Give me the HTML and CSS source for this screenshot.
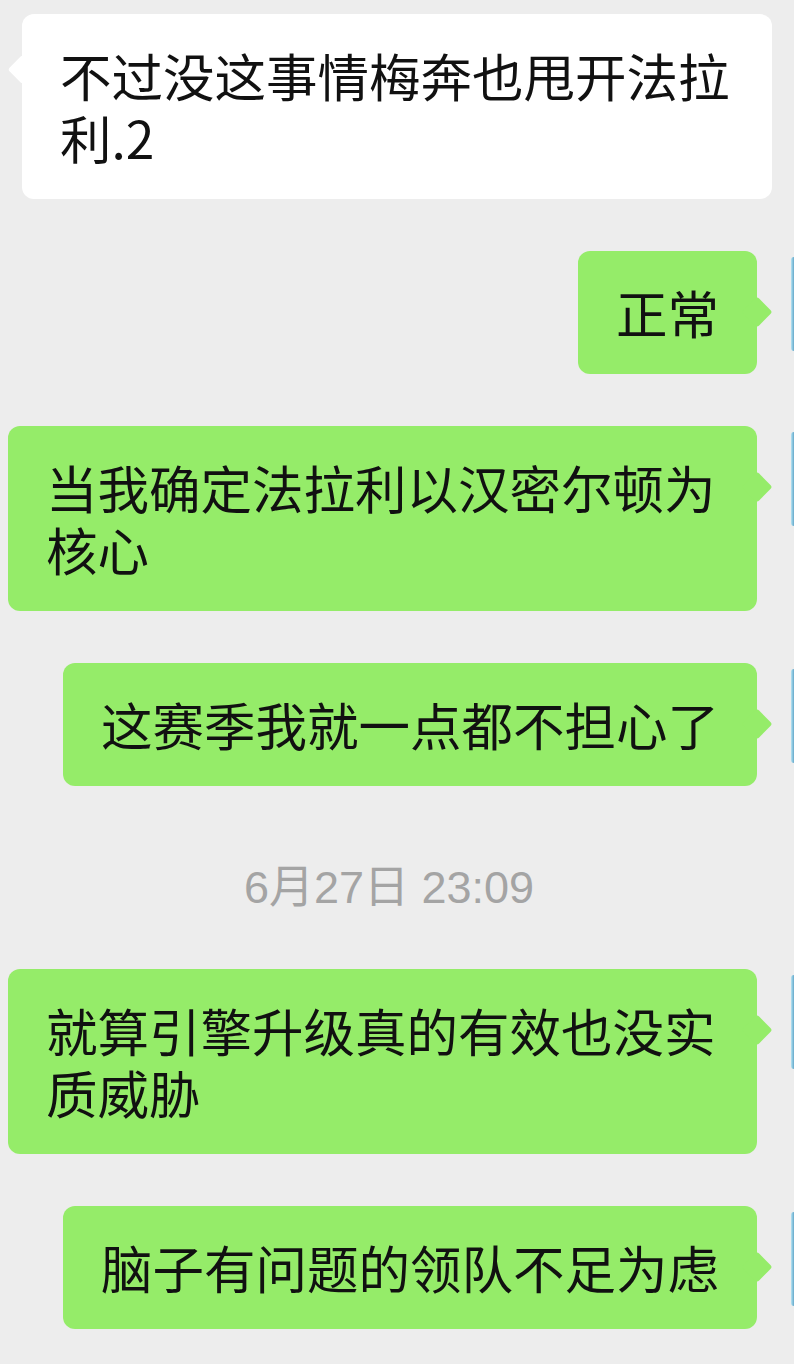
FILE: index.html
```html
<!DOCTYPE html>
<html lang="zh-CN">
<head>
<meta charset="utf-8">
<link rel="stylesheet" href="styles.css">
</head>
<body>
<div class="chat">
  <div class="row row-left">
    <div class="bubble bubble-in">不过没这事情梅奔也甩开法拉利.2</div>
  </div>
  <div class="row row-right">
    <div class="bubble bubble-out">正常</div>
    <div class="avatar"></div>
  </div>
  <div class="row row-right">
    <div class="bubble bubble-out">当我确定法拉利以汉密尔顿为核心</div>
    <div class="avatar"></div>
  </div>
  <div class="row row-right">
    <div class="bubble bubble-out">这赛季我就一点都不担心了</div>
    <div class="avatar"></div>
  </div>
  <div class="time">6月27日 23:09</div>
  <div class="row row-right">
    <div class="bubble bubble-out">就算引擎升级真的有效也没实质威胁</div>
    <div class="avatar"></div>
  </div>
  <div class="row row-right">
    <div class="bubble bubble-out">脑子有问题的领队不足为虑</div>
    <div class="avatar"></div>
  </div>
</div>
</body>
</html>
```
FILE: styles.css
```css
html, body {
  margin: 0;
  padding: 0;
  background: #ededed;
  overflow: hidden;
}
body {
  width: 794px;
  height: 1364px;
  font-family: "Noto Sans CJK SC", "Noto Sans", sans-serif;
  color: #111;
}
.chat {
  display: flex;
  flex-direction: column;
  gap: 52px;
  padding-top: 14px;
}
.row {
  display: flex;
  align-items: flex-start;
}
.row-left {
  padding-left: 22px;
}
.row-right {
  justify-content: flex-end;
}
.bubble {
  position: relative;
  box-sizing: border-box;
  padding: 30px 38px 31px 38px;
  border-radius: 12px;
  font-size: 51.5px;
  line-height: 62px;
  word-break: break-all;
}
.bubble-in {
  background: #ffffff;
  width: 750px;
}
.bubble-in::before {
  content: "";
  position: absolute;
  left: -10px;
  top: 45px;
  width: 21px;
  height: 21px;
  background: #ffffff;
  border-radius: 3px;
  transform: rotate(45deg);
}
.bubble-out {
  background: #95ec69;
  max-width: 749px;
}
.bubble-out::after {
  content: "";
  position: absolute;
  right: -11px;
  top: 50px;
  width: 22px;
  height: 22px;
  background: #95ec69;
  border-radius: 3px;
  transform: rotate(45deg);
}
.avatar {
  flex-shrink: 0;
  width: 3px;
  height: 94px;
  margin-top: 6px;
  margin-left: 34px;
  border-radius: 4px 0 0 4px;
  background: linear-gradient(90deg, #b9e4f4 0px, #7cbcd8 2px, #6aa7c8 3px);
}
.time {
  text-align: center;
  font-size: 45px;
  line-height: 48px;
  color: #a4a4a4;
  padding: 26px 16px 5px 0;
  font-family: "Liberation Sans", "Noto Sans CJK SC", sans-serif;
}
```
